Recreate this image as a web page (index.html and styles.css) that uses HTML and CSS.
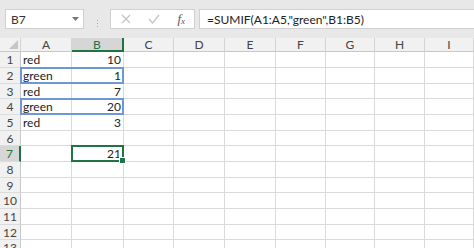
FILE: index.html
```html
<!DOCTYPE html>
<html lang="en">
<head>
    <meta charset="UTF-8">
    <title>SUMIF</title>
    <link rel="stylesheet" href="styles.css">
</head>
<body>

    <div class="toolbar">
        <div class="namebox">
            <span>B7</span>
            <svg class="drop" width="7" height="4" viewBox="0 0 7 4"><path d="M0 0h7L3.5 4z" fill="#777"/></svg>
        </div>
        <div class="grip"><i></i><i></i><i></i></div>
        <div class="fxbox">
            <svg width="10" height="10" viewBox="0 0 10 10"><path d="M1 1l8 8M9 1l-8 8" stroke="#c4c4c4" stroke-width="1.2"/></svg>
            <svg width="12" height="10" viewBox="0 0 12 10"><path d="M1 5l3.5 4L11 1" stroke="#c4c4c4" stroke-width="1.2" fill="none"/></svg>
            <span class="fx">f<sub>x</sub></span>
        </div>
        <div class="formula">=SUMIF(A1:A5,"green",B1:B5)</div>
    </div>

    <div class="sheet">
        <div class="row head">
            <div class="corner"><svg width="9" height="9" viewBox="0 0 9 9"><path d="M9 0v9H0z" fill="#c6c6c6"/></svg></div>
            <div>A</div><div class="sel">B</div><div>C</div><div>D</div><div>E</div><div>F</div><div>G</div><div>H</div><div>I</div>
        </div>
        <div class="row"><div>1</div><div>red</div><div class="num">10</div><div></div><div></div><div></div><div></div><div></div><div></div><div></div></div>
        <div class="row"><div>2</div><div>green</div><div class="num">1</div><div></div><div></div><div></div><div></div><div></div><div></div><div></div></div>
        <div class="row"><div>3</div><div>red</div><div class="num">7</div><div></div><div></div><div></div><div></div><div></div><div></div><div></div></div>
        <div class="row"><div>4</div><div>green</div><div class="num">20</div><div></div><div></div><div></div><div></div><div></div><div></div><div></div></div>
        <div class="row"><div>5</div><div>red</div><div class="num">3</div><div></div><div></div><div></div><div></div><div></div><div></div><div></div></div>
        <div class="row"><div>6</div><div></div><div></div><div></div><div></div><div></div><div></div><div></div><div></div><div></div></div>
        <div class="row"><div class="sel">7</div><div></div><div class="num">21</div><div></div><div></div><div></div><div></div><div></div><div></div><div></div></div>
        <div class="row"><div>8</div><div></div><div></div><div></div><div></div><div></div><div></div><div></div><div></div><div></div></div>
        <div class="row"><div>9</div><div></div><div></div><div></div><div></div><div></div><div></div><div></div><div></div><div></div></div>
        <div class="row"><div>10</div><div></div><div></div><div></div><div></div><div></div><div></div><div></div><div></div><div></div></div>
        <div class="row"><div>11</div><div></div><div></div><div></div><div></div><div></div><div></div><div></div><div></div><div></div></div>
        <div class="row"><div>12</div><div></div><div></div><div></div><div></div><div></div><div></div><div></div><div></div><div></div></div>
        <div class="row"><div>13</div><div></div><div></div><div></div><div></div><div></div><div></div><div></div><div></div><div></div></div>

        <!-- criteria ranges and active cell -->
        <div class="range r2"></div>
        <div class="range r4"></div>
        <div class="active"><span class="handle"></span></div>
    </div>

</body>
</html>
```

FILE: styles.css
```css
body {
    margin: 0;
    width: 474px;
    height: 248px;
    overflow: hidden;
    font-family: Lato, "Liberation Sans", sans-serif;
    font-size: 12px;
    color: #222;
    background-color: white;
}

.toolbar {
    display: flex;
    height: 38px;
    padding-top: 9px;
    box-sizing: border-box;
    background-color: #e8e8e8;
}

.namebox,
.fxbox,
.formula {
    height: 20px;
    box-sizing: border-box;
    background-color: white;
    border: 1px solid #d0d0d0;
    display: flex;
    align-items: center;
}

.namebox {
    width: 79px;
    margin-left: 5px;
    padding: 0 4px 0 5px;
    justify-content: space-between;
    color: #333;
}

.grip {
    width: 26px;
    display: flex;
    flex-direction: column;
    align-items: center;
    justify-content: center;
    gap: 2px;
}

.grip i {
    width: 1px;
    height: 1px;
    background-color: #a8a8a8;
}

.fxbox {
    width: 85px;
    padding: 0 9px 0 10px;
    justify-content: space-between;
}

.fx {
    font-family: "Liberation Serif", serif;
    font-style: italic;
    font-size: 13px;
    color: #555;
    line-height: 1;
}

.fx sub {
    font-size: 9px;
    vertical-align: -1px;
}

.formula {
    flex: 1;
    margin-left: 4px;
    padding-left: 7px;
    border-right: none;
    color: #222;
}

.sheet {
    position: relative;
}

.row {
    display: flex;
    height: 16px;
}

.row:nth-child(3n+4) {
    height: 15px;
}

.row > div {
    box-sizing: border-box;
    border-right: 1px solid #dadada;
    border-bottom: 1px solid #dadada;
    padding: 0 2px;
    line-height: 15px;
    white-space: nowrap;
}

.row > div:nth-child(1) { width: 21px; }
.row > div:nth-child(2) { width: 51px; }
.row > div:nth-child(3) { width: 52px; }
.row > div:nth-child(4) { width: 50px; }
.row > div:nth-child(5) { width: 51px; }
.row > div:nth-child(6) { width: 51px; }
.row > div:nth-child(7) { width: 50px; }
.row > div:nth-child(8) { width: 49px; }
.row > div:nth-child(9) { width: 50px; }
.row > div:nth-child(10) { flex: 1; }

.row > div:first-child {
    background-color: #f1f1f1;
    border-right-color: #c8c8c8;
    border-bottom-color: #dcdcdc;
    text-align: center;
    padding: 0;
    color: #444;
}

.row.head {
    height: 14px;
}

.row.head > div {
    background-color: #f1f1f1;
    border-right-color: #d4d4d4;
    border-bottom-color: #c8c8c8;
    text-align: center;
    line-height: 13px;
    color: #444;
}

.row.head .corner {
    display: flex;
    align-items: flex-end;
    justify-content: flex-end;
    padding: 0 2px 2px 0;
}

.row.head .sel {
    background-color: #d6d6d6;
    border-bottom: 2px solid #217346;
    color: #217346;
}

.row > div.sel {
    background-color: #d6d6d6;
    border-right: 2px solid #217346;
    color: #217346;
}

.num {
    text-align: right;
}

.range {
    position: absolute;
    left: 20px;
    width: 104px;
    height: 17px;
    box-sizing: border-box;
    border: 2px solid #6f97d6;
}

.r2 { top: 29px; }
.r4 { top: 60px; }

.active {
    position: absolute;
    left: 71px;
    top: 107px;
    width: 53px;
    height: 17px;
    box-sizing: border-box;
    border: 2px solid #217346;
}

.handle {
    position: absolute;
    right: -4px;
    bottom: -4px;
    width: 5px;
    height: 5px;
    background-color: #217346;
    border: 1px solid white;
}
```
